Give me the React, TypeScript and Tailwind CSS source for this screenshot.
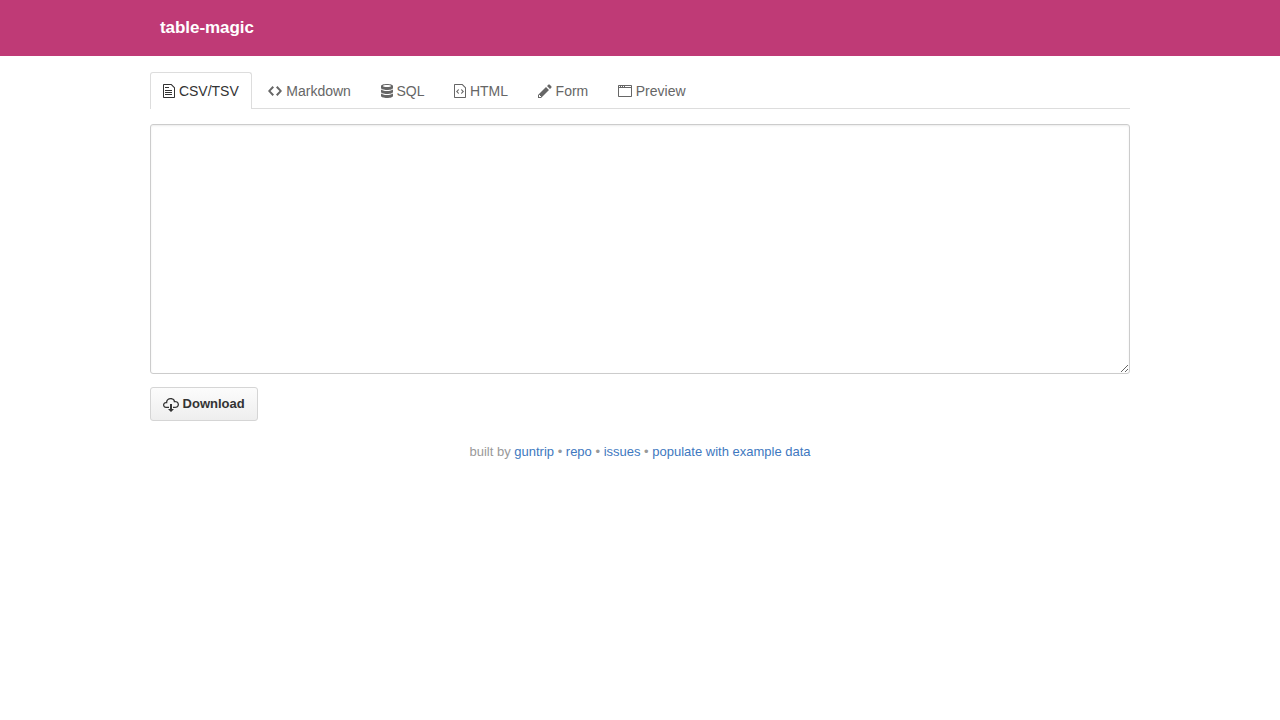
import { useState } from "react";

type IconProps = {
  width: number;
  path: string;
  className?: string;
};

const ICONS = {
  fileText:
    "M6 5H2V4h4v1zM2 8h7V7H2v1zm0 2h7V9H2v1zm0 2h7v-1H2v1zm10-7.5V14c0 .55-.45 1-1 1H1c-.55 0-1-.45-1-1V2c0-.55.45-1 1-1h7.5L12 4.5zM11 5L8 2H1v12h10V5z",
  code: "M9.5 3L8 4.5 11.5 8 8 11.5 9.5 13 14 8 9.5 3zm-5 0L0 8l4.5 5L6 11.5 2.5 8 6 4.5 4.5 3z",
  database:
    "M6 15c-3.31 0-6-.9-6-2v-2c0-.17.09-.34.21-.5.67.86 3 1.5 5.79 1.5s5.12-.64 5.79-1.5c.13.16.21.33.21.5v2c0 1.1-2.69 2-6 2zm0-4c-3.31 0-6-.9-6-2V7c0-.11.04-.21.09-.31.03-.06.07-.13.12-.19C.88 7.36 3.21 8 6 8s5.12-.64 5.79-1.5c.05.06.09.13.12.19.05.1.09.21.09.31v2c0 1.1-2.69 2-6 2zm0-4c-3.31 0-6-.9-6-2V3c0-1.1 2.69-2 6-2s6 .9 6 2v2c0 1.1-2.69 2-6 2zm0-5c-2.21 0-4 .45-4 1s1.79 1 4 1 4-.45 4-1-1.79-1-4-1z",
  fileCode:
    "M8.5 1H1c-.55 0-1 .45-1 1v12c0 .55.45 1 1 1h10c.55 0 1-.45 1-1V4.5L8.5 1zM11 14H1V2h7l3 3v9zM5 6.98L3.5 8.5 5 10l-.5 1L2 8.5 4.5 6l.5.98zM7.5 6L10 8.5 7.5 11l-.5-.98L8.5 8.5 7 7l.5-1z",
  pencil:
    "M0 12v3h3l8-8-3-3-8 8zm3 2H1v-2h1v1h1v1zm10.3-9.3L12 6 9 3l1.3-1.3a.996.996 0 0 1 1.41 0l1.59 1.59c.39.39.39 1.02 0 1.41z",
  browser:
    "M5 3h1v1H5V3zM3 3h1v1H3V3zM1 3h1v1H1V3zm12 10H1V5h12v8zm0-9H7V3h6v1zm1-1c0-.55-.45-1-1-1H1c-.55 0-1 .45-1 1v10c0 .55.45 1 1 1h12c.55 0 1-.45 1-1V3z",
  cloudDownload:
    "M9 12h2l-3 3-3-3h2V7h2v5zm3-8c0-.44-.91-3-4.5-3C5.08 1 3 2.92 3 5 1.02 5 0 6.52 0 8c0 1.53 1 3 3 3h3V9.7H3C1.38 9.7 1.3 8.28 1.3 8c0-.17.05-1.7 1.7-1.7h1.3V5c0-1.39 1.56-2.7 3.2-2.7 2.55 0 3.13 1.55 3.2 1.8v1.2H12c.81 0 2.7.22 2.7 2.2 0 2.09-2.25 2.2-2.7 2.2h-2V11h2c2.08 0 4-1.16 4-3.5C16 5.06 14.08 4 12 4z",
};

const TABS = [
  { label: "CSV/TSV", icon: ICONS.fileText, width: 12 },
  { label: "Markdown", icon: ICONS.code, width: 14 },
  { label: "SQL", icon: ICONS.database, width: 12 },
  { label: "HTML", icon: ICONS.fileCode, width: 12 },
  { label: "Form", icon: ICONS.pencil, width: 14 },
  { label: "Preview", icon: ICONS.browser, width: 14 },
];

const LINKS = ["guntrip", "repo", "issues", "populate with example data"];

function Icon({ width, path, className }: IconProps) {
  return (
    <svg
      width={width}
      height={16}
      viewBox={`0 0 ${width} 16`}
      fill="currentColor"
      className={["shrink-0", className].join(" ")}
      aria-hidden
    >
      <path d={path} />
    </svg>
  );
}

export default function App() {
  const [active, setActive] = useState("CSV/TSV");

  return (
    <div className="min-h-screen bg-white font-['Liberation_Sans',Arial,sans-serif] text-[#333]">
      <header className="h-14 bg-[#bf3a76]">
        <div className="mx-auto w-[980px] px-2.5 pt-4">
          <h1 className="text-[17px] leading-6 font-bold tracking-[-0.06px] text-white">table-magic</h1>
        </div>
      </header>

      <main className="mx-auto w-[980px] pt-4">
        <nav className="mb-[15px] flex gap-[3.64px] border-b border-[#ddd]">
          {TABS.map((tab) => (
            <button
              key={tab.label}
              type="button"
              onClick={() => setActive(tab.label)}
              className={[
                "-mb-px flex h-[37px] items-center gap-[3.9px] rounded-t-[3px] border border-b-0 px-3 text-sm leading-5",
                active === tab.label
                  ? "border-[#ddd] bg-white text-[#333]"
                  : "border-transparent text-[#666]",
              ].join(" ")}
            >
              <Icon width={tab.width} path={tab.icon} />
              {tab.label}
            </button>
          ))}
        </nav>

        <textarea
          aria-label={active}
          className="block h-[250px] w-full resize rounded-[3px] border border-[#ccc] bg-white px-2 py-[7px] text-[13px] shadow-[inset_0_1px_2px_rgba(0,0,0,0.075)] outline-none"
        />

        <button
          type="button"
          className="mt-[13px] flex h-[34px] items-center gap-[3.6px] rounded-[3px] border border-[#d5d5d5] bg-linear-to-b from-[#fcfcfc] to-[#eee] px-3 text-[13px] leading-5 font-bold text-[#333]"
        >
          <Icon width={16} path={ICONS.cloudDownload} className="mt-0.5" />
          Download
        </button>

        <footer className="mt-[21px] text-center text-[13px] leading-5 text-[#999]">
          built by{" "}
          {LINKS.map((link, i) => (
            <span key={link}>
              {i > 0 && " • "}
              <a href="#" className="text-[#4078c0]">
                {link}
              </a>
            </span>
          ))}
        </footer>
      </main>
    </div>
  );
}
